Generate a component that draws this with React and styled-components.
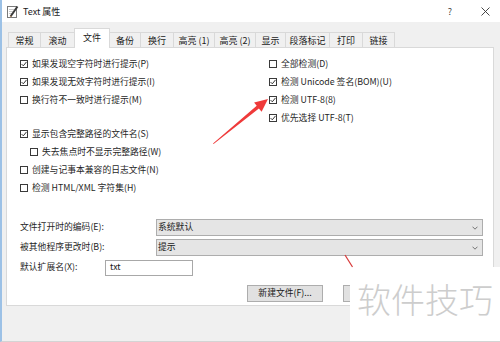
import React from "react";
import styled, { createGlobalStyle } from "styled-components";

const GlobalStyle = createGlobalStyle`
  * { box-sizing: border-box; }
  html, body { margin: 0; padding: 0; background: #ffffff; }
  body {
    width: 500px; height: 342px; overflow: hidden;
    font-family: "Noto Sans CJK SC", "Noto Sans", sans-serif;
    color: #1f1f1f;
  }
`;

const Window = styled.div`
  position: relative;
  width: 500px;
  height: 342px;
  display: flex;
  flex-direction: column;
  background: #f0f0f0;
  border-left: 2px solid #9cc1e6;
  border-bottom: 1px solid #d4d4d4;
  overflow: hidden;
`;

const TitleBar = styled.div`
  height: 22px;
  flex: none;
  display: flex;
  align-items: center;
  background: #ffffff;
  padding-left: 5px;
  font-size: 9px;
`;

const TitleText = styled.span`
  margin-left: 4px;
  line-height: 1;
  color: #1a1a1a;
`;

const Spacer = styled.div`
  flex: 1;
`;

const Control = styled.div`
  width: 30px;
  height: 22px;
  display: flex;
  align-items: center;
  justify-content: center;
  margin-left: ${(p) => p.$gap || 0}px;
  font-size: 9px;
  color: #444;
`;

const Body = styled.div`
  flex: 1;
  display: flex;
  flex-direction: column;
  padding: 6px 6px 0 4px;
`;

const TabRow = styled.div`
  height: 20px;
  display: flex;
  align-items: flex-end;
  padding-left: 2px;
  margin-bottom: -1px;
`;

const Tab = styled.div`
  width: ${(p) => p.$w}px;
  height: ${(p) => (p.$active ? 20 : 16)}px;
  margin-right: -1px;
  display: flex;
  align-items: center;
  justify-content: center;
  border: 1px solid #d9d9d9;
  border-bottom: none;
  background: ${(p) => (p.$active ? "#ffffff" : "#f0f0f0")};
  font-size: 9px;
  line-height: 1;
  color: #1a1a1a;
  white-space: nowrap;
  position: ${(p) => (p.$active ? "relative" : "static")};
  z-index: ${(p) => (p.$active ? 1 : "auto")};
  padding-bottom: ${(p) => (p.$active ? 3 : 0)}px;
`;

const Panel = styled.div`
  height: 259px;
  flex: none;
  background: #ffffff;
  border: 1px solid #d9d9d9;
  padding: 7px 0 0 13px;
  display: flex;
  flex-direction: column;
`;

const CheckGrid = styled.div`
  display: grid;
  grid-template-columns: 249px 1fr;
`;

const Column = styled.div`
  display: flex;
  flex-direction: column;
`;

const Group = styled.div`
  display: flex;
  flex-direction: column;
  margin-top: ${(p) => p.$top || 0}px;
`;

const CheckRow = styled.label`
  height: 18px;
  display: flex;
  align-items: center;
  gap: 4px;
  padding-left: ${(p) => p.$indent || 0}px;
  font-size: 8.8px;
  line-height: 1;
  color: #1f1f1f;
  white-space: nowrap;
`;

const Box = styled.span`
  width: 8px;
  height: 8px;
  flex: none;
  border: 1px solid #3a3a3a;
  background: #ffffff;
  display: flex;
  align-items: center;
  justify-content: center;
`;

const Form = styled.div`
  margin-top: 22px;
  display: flex;
  flex-direction: column;
  gap: 3px;
`;

const FormRow = styled.div`
  height: 17px;
  display: flex;
  align-items: center;
`;

const Label = styled.span`
  width: ${(p) => p.$w}px;
  flex: none;
  font-size: 8.8px;
  line-height: 1;
  color: #1f1f1f;
  white-space: nowrap;
`;

const Select = styled.div`
  width: 327px;
  height: 17px;
  display: flex;
  align-items: center;
  justify-content: space-between;
  background: #e5e5e5;
  border: 1px solid #adadad;
  padding: 0 4px 0 1px;
  font-size: 8.8px;
  line-height: 1;
  color: #1a1a1a;
`;

const TextInput = styled.div`
  width: 88px;
  height: 16px;
  display: flex;
  align-items: center;
  background: #ffffff;
  border: 1px solid #a8a8a8;
  padding-left: 4px;
  font-size: 8.8px;
  line-height: 1;
  color: #1a1a1a;
`;

const ButtonRow = styled.div`
  margin-top: 9px;
  display: flex;
  justify-content: flex-end;
  gap: 20px;
  padding-right: 74px;
`;

const Button = styled.div`
  width: 76px;
  height: 17px;
  display: flex;
  align-items: center;
  justify-content: center;
  background: #e1e1e1;
  border: 1px solid #adadad;
  font-size: 8.8px;
  line-height: 1;
  color: #1a1a1a;
  white-space: nowrap;
`;

const Overlay = styled.svg`
  position: absolute;
  left: -2px;
  top: 0;
  width: 500px;
  height: 342px;
  pointer-events: none;
`;

const Watermark = styled.div`
  position: absolute;
  right: 0;
  bottom: -1px;
  width: 150px;
  height: 75px;
  background: #ffffff;
  padding: 15px 0 0 7px;
  font-size: 34px;
  font-weight: 300;
  line-height: 1;
  color: #cdcdcd;
  white-space: nowrap;
`;

const Check = () => (
  <svg width="6" height="6" viewBox="0 0 6 6">
    <path d="M0.6 3.1 L2.3 4.8 L5.5 0.9" fill="none" stroke="#333" strokeWidth="1" />
  </svg>
);

const CheckItem = ({ checked, indent, children }) => (
  <CheckRow $indent={indent}>
    <Box>{checked && <Check />}</Box>
    <span>{children}</span>
  </CheckRow>
);

const Chevron = () => (
  <svg width="6" height="4" viewBox="0 0 6 4">
    <path d="M0.5 0.7 L3 3.2 L5.5 0.7" fill="none" stroke="#666" strokeWidth="0.9" />
  </svg>
);

const AppIcon = () => (
  <svg width="12" height="13" viewBox="0 0 12 13">
    <rect x="0.5" y="1.5" width="9" height="11" fill="#fff" stroke="#7a7a7a" />
    <path d="M2 4.5 H7 M2 6.5 H6 M2 8.5 H5" stroke="#bbb" strokeWidth="0.8" />
    <path d="M3.5 11.5 L10.5 1.5" stroke="#3a3a3a" strokeWidth="2" />
    <path d="M3 12.2 L3.8 10.6 L4.8 11.3 Z" fill="#c08040" />
  </svg>
);

const CloseIcon = () => (
  <svg width="9" height="9" viewBox="0 0 9 9">
    <path d="M0.5 0.5 L8.5 8.5 M8.5 0.5 L0.5 8.5" stroke="#333" strokeWidth="0.9" />
  </svg>
);

const tabs = [
  { label: "常规", w: 33 },
  { label: "滚动", w: 35 },
  { label: "文件", w: 36, active: true },
  { label: "备份", w: 32 },
  { label: "换行", w: 34 },
  { label: "高亮 (1)", w: 42 },
  { label: "高亮 (2)", w: 42 },
  { label: "显示", w: 31 },
  { label: "段落标记", w: 45 },
  { label: "打印", w: 34 },
  { label: "链接", w: 33 },
];

export default function App() {
  return (
    <>
      <GlobalStyle />
      <Window>
        <TitleBar>
          <AppIcon />
          <TitleText>Text 属性</TitleText>
          <Spacer />
          <Control>?</Control>
          <Control $gap={5}>
            <CloseIcon />
          </Control>
        </TitleBar>
        <Body>
          <TabRow>
            {tabs.map((t) => (
              <Tab key={t.label} $w={t.w} $active={t.active}>
                {t.label}
              </Tab>
            ))}
          </TabRow>
          <Panel>
            <CheckGrid>
              <Column>
                <Group>
                  <CheckItem checked>如果发现空字符时进行提示(P)</CheckItem>
                  <CheckItem checked>如果发现无效字符时进行提示(I)</CheckItem>
                  <CheckItem>换行符不一致时进行提示(M)</CheckItem>
                </Group>
                <Group $top={16}>
                  <CheckItem checked>显示包含完整路径的文件名(S)</CheckItem>
                  <CheckItem indent={10}>失去焦点时不显示完整路径(W)</CheckItem>
                  <CheckItem>创建与记事本兼容的日志文件(N)</CheckItem>
                  <CheckItem>检测 HTML/XML 字符集(H)</CheckItem>
                </Group>
              </Column>
              <Column>
                <CheckItem>全部检测(D)</CheckItem>
                <CheckItem checked>检测 Unicode 签名(BOM)(U)</CheckItem>
                <CheckItem checked>检测 UTF-8(8)</CheckItem>
                <CheckItem checked>优先选择 UTF-8(T)</CheckItem>
              </Column>
            </CheckGrid>
            <Form>
              <FormRow>
                <Label $w={136}>文件打开时的编码(E):</Label>
                <Select>
                  <span>系统默认</span>
                  <Chevron />
                </Select>
              </FormRow>
              <FormRow>
                <Label $w={136}>被其他程序更改时(B):</Label>
                <Select>
                  <span>提示</span>
                  <Chevron />
                </Select>
              </FormRow>
              <FormRow>
                <Label $w={85}>默认扩展名(X):</Label>
                <TextInput>txt</TextInput>
              </FormRow>
            </Form>
            <ButtonRow>
              <Button>新建文件(F)...</Button>
              <Button />
            </ButtonRow>
          </Panel>
        </Body>
        <Watermark>软件技巧</Watermark>
        <Overlay viewBox="0 0 500 342">
          <polygon
            points="213,143.5 256.7,105.7 254.1,102.4 268,99 261.6,111.8 258.9,108.5 213.6,144"
            fill="#ef3a3a"
          />
          <path d="M345 255 L352.5 267" stroke="#d83a3a" strokeWidth="1.2" />
        </Overlay>
      </Window>
    </>
  );
}
